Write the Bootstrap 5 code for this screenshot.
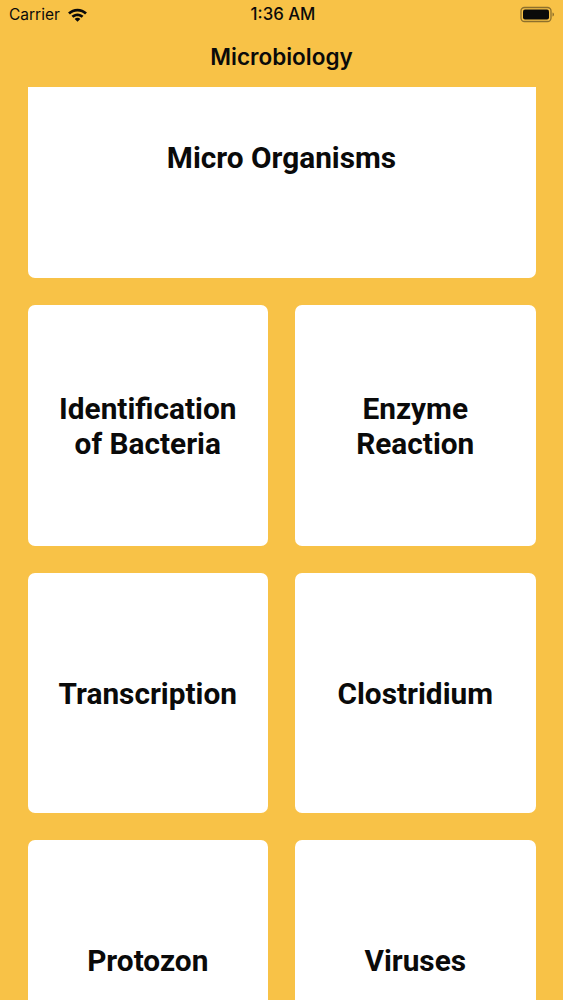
<!DOCTYPE html>
<html lang="en">
<head>
<meta charset="utf-8">
<title>Microbiology</title>
<link href="https://cdn.jsdelivr.net/npm/bootstrap@5.3.0/dist/css/bootstrap.min.css" rel="stylesheet">
<style>
html,body{height:1000px;overflow:hidden}
body{background:#f8c247;color:#0a0a0a;font-family:Roboto,"Liberation Sans",sans-serif}
.status-row{height:29px;padding:0 8px 0 9px;font-family:Inter,"Liberation Sans",sans-serif;font-size:15.5px;line-height:29px;position:relative}
.status-time{font-size:16.8px;font-weight:500;position:absolute;left:0;right:0;padding-left:3px;text-align:center}
.carrier{font-weight:400;margin-right:7px}
.title-row{height:58px;padding-top:13px;font-family:Inter,"Liberation Sans",sans-serif;font-size:22.5px;font-weight:600;line-height:30px;text-align:center}
.tile-wrap{padding:0 27px 0 27.5px;display:grid;grid-template-columns:240.5px 240.5px;column-gap:27px;row-gap:27px}
.tile{background:#fff;border-radius:0 0 7px 7px;height:191px;grid-column:1/3;font-size:29.8px;font-weight:700;line-height:35px;text-align:center}
.tile-top{padding-bottom:51px}
.tile-std{height:240.5px;grid-column:auto;border-radius:7px;padding:1px 8px 0}
</style>
</head>
<body>
<div class="status-row d-flex align-items-center">
  <span class="status-time">1:36 AM</span>
  <span class="carrier">Carrier</span>
  <svg width="21" height="16" viewBox="0 0 20 15" aria-hidden="true"><path fill="#0a0a0a" d="M10 1.500C6.600 1.500 3.500 2.800 1 5.100L2.800 7.100C4.700 5.300 7.200 4.100 10 4.100s5.300 1.200 7.200 3l1.800-2C16.500 2.800 13.400 1.500 10 1.500zM10 6c-2.200 0-4.200.9-5.700 2.300L6 10.200c1-1 2.400-1.600 4-1.600s3 .6 4 1.600l1.700-1.900C14.200 6.900 12.200 6 10 6zM10 10.200c-1.100 0-2 .4-2.700 1.100L10 14l2.700-2.700c-.7-.7-1.600-1.100-2.700-1.100z"/></svg>
  <svg class="ms-auto" width="35" height="17" viewBox="0 0 35 17" aria-hidden="true"><rect x="1" y="1.500" width="30" height="14" rx="3.500" fill="none" stroke="#0a0a0a" stroke-opacity=".45" stroke-width="1.300"/><rect x="3" y="3.500" width="26" height="10" rx="2" fill="#0a0a0a"/><path d="M32.500 6.500v4c.9-.3 1.500-1 1.500-2s-.6-1.700-1.500-2z" fill="#0a0a0a" fill-opacity=".45"/></svg>
</div>
<div class="title-row">Microbiology</div>
<div class="tile-wrap">
  <div class="tile tile-top d-flex align-items-center justify-content-center">Micro Organisms</div>
  <div class="tile tile-std d-flex align-items-center justify-content-center">Identification<br>of Bacteria</div>
  <div class="tile tile-std d-flex align-items-center justify-content-center">Enzyme<br>Reaction</div>
  <div class="tile tile-std d-flex align-items-center justify-content-center">Transcription</div>
  <div class="tile tile-std d-flex align-items-center justify-content-center">Clostridium</div>
  <div class="tile tile-std d-flex align-items-center justify-content-center">Protozon</div>
  <div class="tile tile-std d-flex align-items-center justify-content-center">Viruses</div>
</div>
<script src="https://cdn.jsdelivr.net/npm/bootstrap@5.3.0/dist/js/bootstrap.bundle.min.js"></script>
</body>
</html>
